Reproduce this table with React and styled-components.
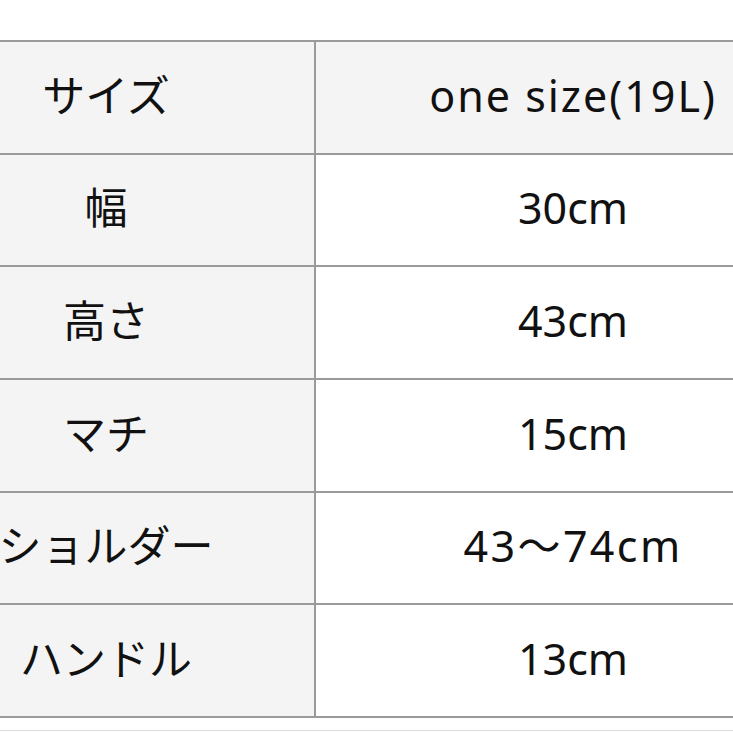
import React from "react";
import styled, { createGlobalStyle } from "styled-components";

const GlobalStyle = createGlobalStyle`
  html, body {
    margin: 0;
    padding: 0;
    background: #ffffff;
    overflow: hidden;
  }
  body {
    font-family: "Noto Sans", "Noto Sans CJK JP", sans-serif;
    color: #111111;
  }
`;

const Page = styled.div`
  width: 733px;
  height: 733px;
  padding-top: 40px;
  box-sizing: border-box;
  overflow: hidden;
`;

const SizeTable = styled.div`
  display: grid;
  grid-template-columns: 416px 514px;
  grid-auto-rows: 110.67px;
  gap: 2px;
  padding: 2px;
  margin-left: -104px;
  width: max-content;
  background: #9a9a9a;
`;

const Cell = styled.div`
  display: flex;
  align-items: center;
  justify-content: center;
  background: ${(p) => (p.$shaded ? "#f4f4f4" : "#ffffff")};
  font-size: 43px;
  line-height: 1;
  letter-spacing: ${(p) => p.$spacing || 0}px;
  white-space: nowrap;
  padding-bottom: 4px;
  box-sizing: border-box;
`;

const NextLine = styled.div`
  margin-top: 12px;
  border-top: 1px solid #dcdcdc;
`;

const rows = [
  { label: "サイズ", value: "one size(19L)", spacing: 2 },
  { label: "幅", value: "30cm" },
  { label: "高さ", value: "43cm" },
  { label: "マチ", value: "15cm" },
  { label: "ショルダー", value: "43〜74cm", spacing: 2.4 },
  { label: "ハンドル", value: "13cm" },
];

const App = () => (
  <Page>
    <GlobalStyle />
    <SizeTable>
      {rows.map((row, i) => (
        <React.Fragment key={row.label}>
          <Cell $shaded>{row.label}</Cell>
          <Cell $shaded={i === 0} $spacing={row.spacing}>
            {row.value}
          </Cell>
        </React.Fragment>
      ))}
    </SizeTable>
    <NextLine />
  </Page>
);

export default App;
